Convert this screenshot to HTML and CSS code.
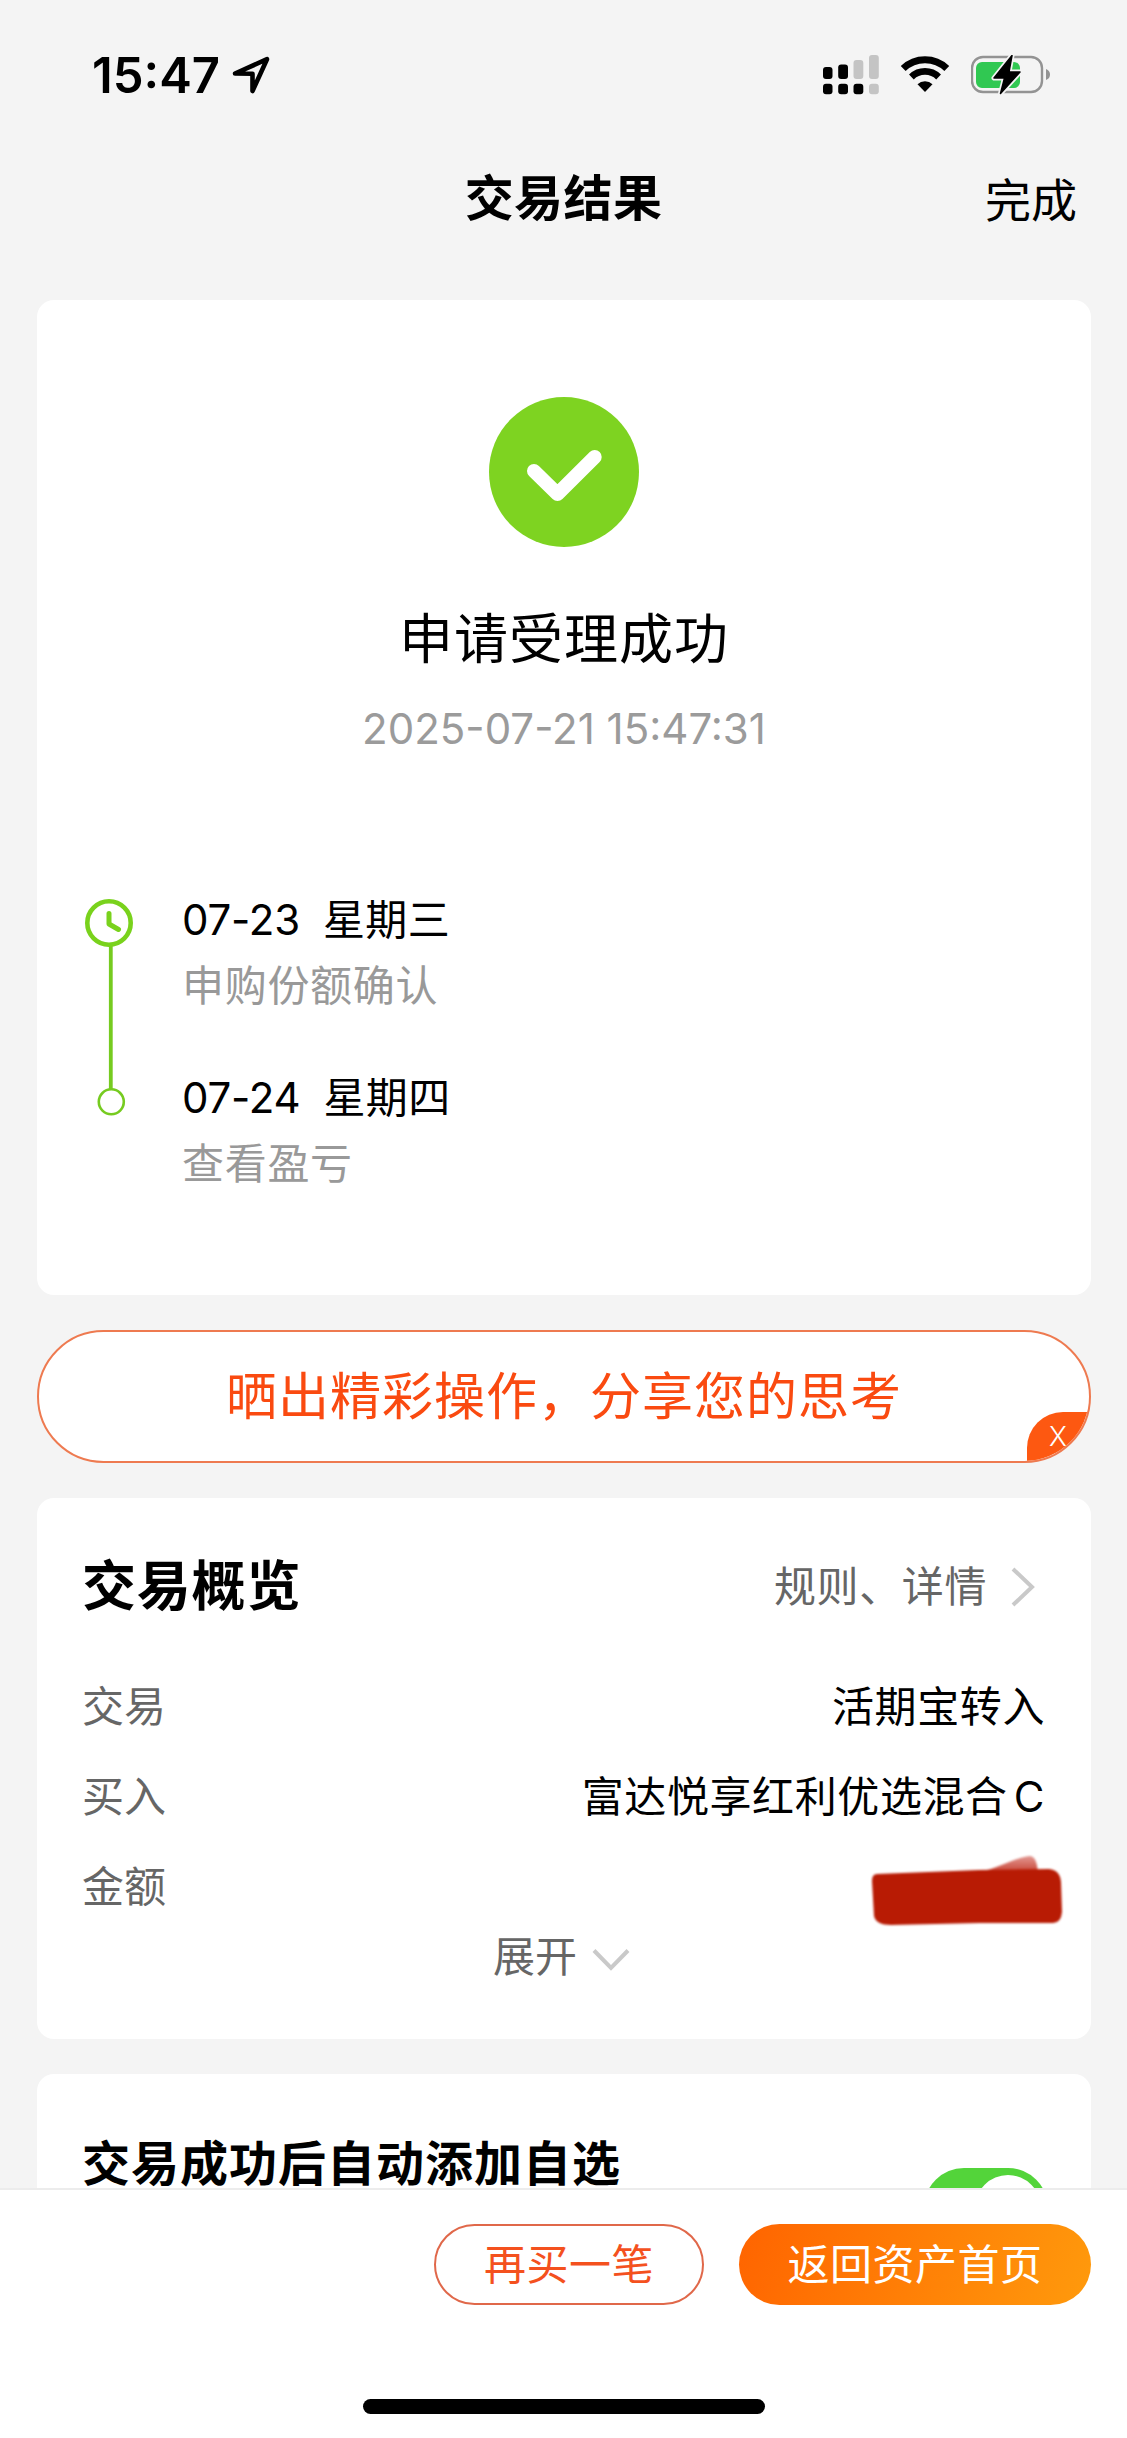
FILE: index.html
```html
<!DOCTYPE html>
<html lang="zh-CN">
<head>
    <meta charset="UTF-8">
    <meta name="viewport" content="width=device-width, initial-scale=1.0">
    <title>交易结果</title>
    <link rel="stylesheet" href="styles.css">
</head>
<body>
    <div class="page">
        <div class="status-bar">
            <span class="time">15:47</span>
            <svg class="location" width="40" height="40" viewBox="0 0 40 40">
                <path d="M4 18.5 L36 4.2 L21.5 36 L21.5 18.8 Z" fill="none" stroke="#000" stroke-width="4.6" stroke-linejoin="round"/>
            </svg>
            <div class="status-icons">
                <svg width="56" height="40" viewBox="0 0 56 40">
                    <rect x="0" y="12" width="9.5" height="12" rx="3"/>
                    <rect x="15.2" y="9.5" width="9.8" height="14.5" rx="3"/>
                    <rect x="30.5" y="5" width="9.8" height="19" rx="3" fill="#c4c4c4"/>
                    <rect x="46" y="0" width="9.8" height="24" rx="3" fill="#c4c4c4"/>
                    <rect x="0" y="28.8" width="9.5" height="10.4" rx="3"/>
                    <rect x="15.2" y="28.8" width="9.8" height="10.4" rx="3"/>
                    <rect x="30.5" y="28.8" width="9.8" height="10.4" rx="3"/>
                    <rect x="46" y="28.8" width="9.8" height="10.4" rx="3" fill="#c4c4c4"/>
                </svg>
                <svg width="50" height="40" viewBox="0 0 50 40">
                    <path d="M3.2 13.5 A31.5 31.5 0 0 1 46.8 13.5" fill="none" stroke="#000" stroke-width="7"/>
                    <path d="M11.4 22 A19.5 19.5 0 0 1 38.6 22" fill="none" stroke="#000" stroke-width="6.8"/>
                    <path d="M17.5 29.2 A11 11 0 0 1 32.5 29.2 L25 37 Z"/>
                </svg>
                <svg width="80" height="40" viewBox="0 0 80 40">
                    <rect x="1" y="2" width="70" height="35" rx="11" fill="none" stroke="#939393" stroke-width="2.4"/>
                    <rect x="5" y="7" width="44" height="26" rx="6" fill="#30c852"/>
                    <path d="M75 14 Q79 15.5 79 19.5 T75 25 Z" fill="#939393"/>
                    <path d="M41 0.5 L23 23 H33.5 L29.5 38.5 L49 17 H38 Z" stroke="#f4f4f4" stroke-width="5" stroke-linejoin="round"/>
                    <path d="M41 0.5 L23 23 H33.5 L29.5 38.5 L49 17 H38 Z" stroke="#000" stroke-width="1.5" stroke-linejoin="round"/>
                </svg>
            </div>
        </div>

        <div class="nav">
            <span></span>
            <h1>交易结果</h1>
            <a class="done">完成</a>
        </div>

        <div class="content">
            <div class="card result">
                <svg class="success" width="150" height="150" viewBox="0 0 150 150">
                    <circle cx="75" cy="75" r="75" fill="#7ed321"/>
                    <path d="M45 74 L68.5 97 L105.7 60" fill="none" stroke="#fff" stroke-width="14" stroke-linecap="round" stroke-linejoin="round"/>
                </svg>
                <h2>申请受理成功</h2>
                <div class="datetime">2025-07-21 15:47:31</div>

                <div class="timeline">
                    <svg width="48" height="220" viewBox="0 0 48 220">
                        <path d="M25.8 46 V191" stroke="#76cb20" stroke-width="3.8"/>
                        <circle cx="24" cy="24" r="21.7" fill="#fff" stroke="#79d21c" stroke-width="4.6"/>
                        <path d="M24 14.5 V25 L33.5 30.5" fill="none" stroke="#79d21c" stroke-width="5" stroke-linecap="round" stroke-linejoin="round"/>
                        <circle cx="26.3" cy="202.8" r="12.5" fill="#fff" stroke="#76cb20" stroke-width="2.6"/>
                    </svg>
                    <div class="steps">
                        <div class="step">
                            <div class="step-date">07-23<span>星期三</span></div>
                            <div class="step-text">申购份额确认</div>
                        </div>
                        <div class="step">
                            <div class="step-date">07-24<span>星期四</span></div>
                            <div class="step-text">查看盈亏</div>
                        </div>
                    </div>
                </div>
            </div>

            <div class="share">
                晒出精彩操作，分享您的思考
                <span class="share-close">X</span>
            </div>

            <div class="card overview">
                <div class="overview-head">
                    <h3>交易概览</h3>
                    <a class="rules">规则、详情
                        <svg width="26" height="40" viewBox="0 0 26 40">
                            <path d="M3 2 L22 20 L3 38" fill="none" stroke="#c9c9c9" stroke-width="4"/>
                        </svg>
                    </a>
                </div>
                <div class="row"><span class="label">交易</span><span>活期宝转入</span></div>
                <div class="row"><span class="label">买入</span><span>富达悦享红利优选混合<i>C</i></span></div>
                <div class="row">
                    <span class="label">金额</span>
                    <!-- 金额遮盖 -->
                    <svg class="mask" width="196" height="74" viewBox="0 0 196 74">
                        <defs>
                            <linearGradient id="tail" x1="0" y1="1" x2="0" y2="0">
                                <stop offset="0" stop-color="#c53a2a"/>
                                <stop offset="1" stop-color="#e39a94"/>
                            </linearGradient>
                        </defs>
                        <path d="M110 18 C130 14 145 4 160 2 Q168 1 169 20 Z" fill="url(#tail)"/>
                        <path class="mask-body" d="M8 20 Q60 18 110 16 L180 15 Q191 16 192 28 L193 58 Q192 69 184 69 L110 69 L22 71 Q7 71 5 62 L3 27 Q3 20 8 20 Z"/>
                    </svg>
                </div>
                <div class="expand">展开
                    <svg width="38" height="24" viewBox="0 0 38 24">
                        <path d="M2 2.5 L19 20 L36 2.5" fill="none" stroke="#c9c9c9" stroke-width="4"/>
                    </svg>
                </div>
            </div>

            <div class="card auto-add">
                <h4>交易成功后自动添加自选</h4>
                <div class="switch"></div>
            </div>
        </div>

        <div class="footer">
            <div class="buttons">
                <a class="btn btn-outline">再买一笔</a>
                <a class="btn btn-fill">返回资产首页</a>
            </div>
            <div class="home-indicator"></div>
        </div>
    </div>
</body>
</html>
```
FILE: styles.css
```css
* {
    box-sizing: border-box;
}

body {
    margin: 0;
    background: #f4f4f4;
    color: #000;
    font-family: Inter, "Noto Sans CJK SC", sans-serif;
    font-size: 42px;
}

h1, h2, h3, h4 {
    margin: 0;
}

svg {
    display: block;
    flex: none;
}

.page {
    width: 1127px;
    height: 2438px;
    display: flex;
    flex-direction: column;
    overflow: hidden;
}

.status-bar {
    flex: none;
    height: 150px;
    padding: 0 76px 0 92px;
    display: flex;
    align-items: center;
}

.time {
    font-size: 49px;
    font-weight: 600;
}

.location {
    margin-left: 11px;
}

.status-icons {
    margin-left: auto;
    display: flex;
    gap: 21px;
}

.nav {
    flex: none;
    height: 98px;
    margin-bottom: 52px;
    padding: 0 50px;
    display: grid;
    grid-template-columns: 1fr auto 1fr;
    align-items: center;
}

.nav h1 {
    font-size: 49px;
    font-weight: 600;
    line-height: 60px;
    letter-spacing: 0.4px;
}

.done {
    padding-top: 1px;
    text-align: right;
    font-size: 46px;
    line-height: 60px;
}

.content {
    flex: 1;
    min-height: 0;
    overflow: hidden;
    padding: 0 36px 0 37px;
}

.card {
    background: #fff;
    border-radius: 17px;
}

.result {
    height: 995px;
    padding-top: 97px;
    text-align: center;
}

.success {
    margin: 0 auto;
}

.result h2 {
    margin-top: 61px;
    font-size: 54px;
    font-weight: 400;
    line-height: 64px;
    letter-spacing: 1px;
}

.datetime {
    margin-top: 27px;
    color: #9b9b9b;
    line-height: 60px;
}

.timeline {
    margin-top: 140px;
    padding-left: 48px;
    display: flex;
    text-align: left;
}

.steps {
    margin-left: 49px;
}

.step {
    height: 178px;
}

.step-date {
    line-height: 42px;
    letter-spacing: -0.2px;
}

.step-date span {
    margin-left: 23px;
    letter-spacing: 0.4px;
}

.step-text {
    margin-top: 24px;
    color: #999;
    line-height: 42px;
    letter-spacing: 0.7px;
}

.share {
    position: relative;
    height: 133px;
    margin: 35px 0;
    border: 2px solid #ee7a50;
    border-radius: 67px;
    background: #fff;
    color: #fa4a10;
    font-size: 51px;
    line-height: 129px;
    letter-spacing: 1px;
    text-align: center;
    overflow: hidden;
}

.share-close {
    position: absolute;
    right: 0;
    bottom: 0;
    width: 62px;
    height: 49px;
    border-top-left-radius: 36px;
    background: #fd5811;
    color: #fff;
    font-size: 27px;
    font-weight: 300;
    line-height: 50px;
    letter-spacing: 0;
}

.overview {
    height: 541px;
    padding: 48px 46px 0 45px;
}

.overview-head {
    height: 82px;
    margin-bottom: 34px;
    display: flex;
    align-items: center;
    justify-content: space-between;
}

.overview h3 {
    font-size: 54px;
    font-weight: 600;
    line-height: 82px;
    letter-spacing: 0.8px;
}

.rules {
    display: flex;
    align-items: center;
    gap: 23px;
    padding-right: 9px;
    color: #666;
    line-height: 50px;
    letter-spacing: 0.6px;
}

.row {
    height: 90px;
    display: flex;
    align-items: center;
    justify-content: space-between;
    line-height: 60px;
    letter-spacing: 0.6px;
}

.row i {
    margin-left: 6px;
    font-style: normal;
}

.label {
    color: #666;
    letter-spacing: 0;
}

.mask {
    margin: 7px -20px 0 0;
    filter: blur(1px);
}

.mask-body {
    fill: #b81b04;
}

.expand {
    height: 50px;
    padding-right: 4px;
    display: flex;
    align-items: center;
    justify-content: center;
    gap: 15px;
    color: #666;
    line-height: 50px;
}

.expand svg {
    margin-top: 5px;
}

.auto-add {
    height: 260px;
    margin-top: 35px;
    padding: 67px 43px 0 45px;
    display: flex;
    align-items: flex-start;
    justify-content: space-between;
}

.auto-add h4 {
    font-size: 48px;
    font-weight: 600;
    line-height: 45px;
    letter-spacing: 1px;
}

.switch {
    width: 124px;
    height: 80px;
    margin-top: 27px;
    padding: 7px;
    border-radius: 40px;
    background: #53d43a;
}

.switch::after {
    content: "";
    display: block;
    width: 66px;
    height: 66px;
    margin-left: auto;
    border-radius: 50%;
    background: #fff;
}

.footer {
    flex: none;
    height: 250px;
    padding: 34px 36px 0;
    border-top: 2px solid #ececec;
    background: #fff;
}

.buttons {
    display: flex;
    justify-content: flex-end;
    gap: 35px;
}

.btn {
    height: 81px;
    border-radius: 41px;
    line-height: 81px;
    text-align: center;
    letter-spacing: 0.5px;
}

.btn-outline {
    width: 270px;
    border: 2px solid #e0684a;
    color: #f4511e;
    line-height: 77px;
}

.btn-fill {
    width: 352px;
    background: linear-gradient(110deg, #ff6400, #ff9a0c);
    color: #fff;
}

.home-indicator {
    width: 402px;
    height: 15px;
    margin: 94px auto 0;
    border-radius: 8px;
    background: #000;
}
```
